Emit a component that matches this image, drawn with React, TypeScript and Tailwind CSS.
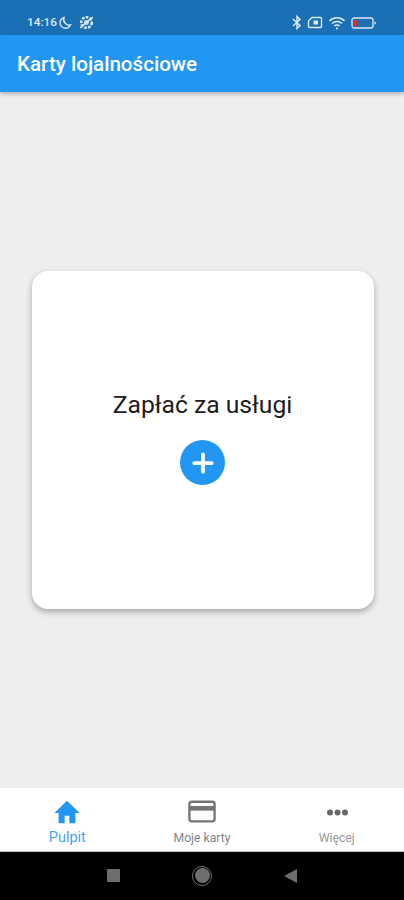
import { Plus } from 'lucide-react'

function StatusBar() {
  return (
    <div className="h-[35px] shrink-0 bg-[#1a6fb5] flex items-center justify-between pl-[27px] pr-[27px] pt-[10px] text-[#dbe9f5]">
      <div className="flex items-center">
        <span className="text-[11.800px] font-medium">14:16</span>
        {/* moon */}
        <svg className="w-[14px] h-[14px] ml-[1px]" viewBox="0 0 14 14" fill="none" stroke="currentColor" strokeWidth="1.400">
          <path d="M6 1.500a5.500 5.500 0 1 0 6.500 7.500C8.500 10 4.500 6 6 1.500z" />
        </svg>
        {/* muted gear */}
        <svg className="w-[17px] h-[17px] ml-[6px]" viewBox="0 0 16 16" fill="none" stroke="currentColor" strokeWidth="1.500">
          <circle cx="8" cy="8" r="5" strokeDasharray="2.500 1.200" strokeWidth="2.400" />
          <circle cx="8" cy="8" r="1.600" />
          <path d="M2 13L14 3" />
        </svg>
      </div>
      <div className="flex items-center gap-[5px]">
        {/* bluetooth */}
        <svg className="w-[10px] h-[15px]" viewBox="0 0 10 15" fill="none" stroke="currentColor" strokeWidth="1.500">
          <path d="M1 4l7 6.500L5 13.500V1.500L8 4.500L1 11" />
        </svg>
        {/* sim */}
        <svg className="w-[16px] h-[13px]" viewBox="0 0 15 13" fill="none" stroke="currentColor" strokeWidth="1.400">
          <path d="M4.500 1.500H13a1 1 0 0 1 1 1v8a1 1 0 0 1-1 1H2a1 1 0 0 1-1-1V5z" />
          <rect x="6" y="4.500" width="4.500" height="4" fill="currentColor" stroke="none" />
        </svg>
        {/* wifi */}
        <svg className="w-[18px] h-[14px]" viewBox="0 0 16 13" fill="none" stroke="currentColor" strokeWidth="1.400">
          <path d="M1 4.500a10 10 0 0 1 14 0M3.300 7a6.600 6.600 0 0 1 9.400 0M5.600 9.300a3.300 3.300 0 0 1 4.800 0" />
          <circle cx="8" cy="11.500" r="1" fill="currentColor" stroke="none" />
        </svg>
        {/* battery */}
        <svg className="w-[26px] h-[12px]" viewBox="0 0 26 12" fill="none">
          <rect x="1" y="1" width="21" height="10" rx="2" stroke="currentColor" strokeWidth="1.300" />
          <rect x="3" y="3" width="3" height="6" fill="#d9342b" />
          <path d="M23.500 4l1.800 2-1.800 2z" fill="currentColor" />
        </svg>
      </div>
    </div>
  )
}

export default function App() {
  return (
    <div className="w-[404px] h-[900px] flex flex-col bg-[#eeeeee] overflow-hidden font-['Roboto',sans-serif]">
      <StatusBar />
      {/* App bar */}
      <div className="h-[57px] shrink-0 bg-[#2196f3] flex items-center pl-[17px] pt-[1px] shadow-[0_2px_4px_rgba(0,0,0,0.25)] z-10">
        <h1 className="text-white text-[20.600px] font-medium">Karty lojalnościowe</h1>
      </div>

      {/* Content */}
      <div className="flex-1 flex items-center justify-center">
        <div className="w-[342px] h-[338px] ml-[1px] bg-white rounded-[16px] shadow-[0_3px_6px_rgba(0,0,0,0.3)] flex flex-col items-center pt-[118px]">
          <p className="text-[24.700px] leading-[32px] text-[#1c1c1c]">Zapłać za usługi</p>
          <button className="mt-[19px] w-[45px] h-[45px] rounded-full bg-[#2196f3] flex items-center justify-center">
            <Plus className="w-[30px] h-[30px] text-white" strokeWidth={3} />
          </button>
        </div>
      </div>

      {/* Bottom nav */}
      <div className="h-[64px] shrink-0 bg-white border-b border-[#c8c8c8] grid grid-cols-3">
        <div className="flex flex-col items-center pt-[11px]">
          <svg className="w-[28px] h-[27px] text-[#2196f3]" viewBox="0 0 30 27" fill="currentColor">
            <path d="M15 1L1.500 14H6v11h6.500v-8h5v8H24V14h4.500z" />
          </svg>
          <span className="text-[14.500px] leading-[16px] mt-[4px] text-[#46a4ea]">Pulpit</span>
        </div>
        <div className="flex flex-col items-center pt-[12px]">
          <svg className="w-[28px] h-[24px] text-[#757575]" viewBox="0 0 30 25" fill="none">
            <rect x="1.500" y="1.500" width="27" height="21" rx="2.500" stroke="currentColor" strokeWidth="2.500" />
            <rect x="2" y="6" width="26" height="5" fill="currentColor" />
          </svg>
          <span className="text-[12.200px] leading-[16px] mt-[6px] text-[#858585]">Moje karty</span>
        </div>
        <div className="flex flex-col items-center pt-[12px]">
          <svg className="w-[30px] h-[25px] text-[#666666]" viewBox="0 0 30 25" fill="currentColor">
            <circle cx="8" cy="12.500" r="3" />
            <circle cx="15.500" cy="12.500" r="3" />
            <circle cx="23" cy="12.500" r="3" />
          </svg>
          <span className="text-[12.200px] leading-[16px] mt-[5px] text-[#969696]">Więcej</span>
        </div>
      </div>

      {/* System nav */}
      <div className="h-[48px] shrink-0 bg-black flex items-center justify-center gap-[72px] pb-[1px]">
        <div className="w-[13px] h-[13px] bg-[#6e6e6e] rounded-[1px]" />
        <div className="w-[20px] h-[20px] rounded-full border border-[#6e6e6e] flex items-center justify-center">
          <div className="w-[15px] h-[15px] rounded-full bg-[#6e6e6e]" />
        </div>
        <svg className="w-[13px] h-[14px] text-[#6e6e6e]" viewBox="0 0 13 14" fill="currentColor">
          <path d="M0 7l13-7v14z" />
        </svg>
      </div>
    </div>
  )
}
